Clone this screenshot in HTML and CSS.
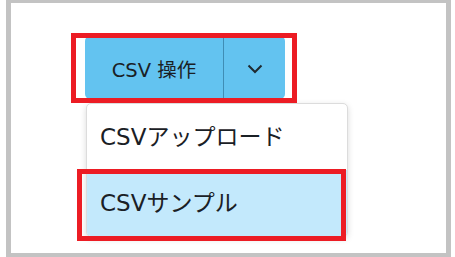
FILE: index.html
```html
<!DOCTYPE html>
<html lang="ja">
<head>
    <meta charset="UTF-8">
    <title>CSV操作</title>
    <link rel="stylesheet" href="styles.css">
</head>
<body>
<div class="frame">
    <div class="btn-group">
        <button class="btn-main" type="button">CSV 操作</button>
        <button class="btn-toggle" type="button">
            <svg width="16" height="10" viewBox="0 0 16 10">
                <path d="M1.5 1.5 L8 8 L14.5 1.5" fill="none" stroke="#1f2a30" stroke-width="2"/>
            </svg>
        </button>
    </div>
    <ul class="menu">
        <li class="menu-item">CSVアップロード</li>
        <li class="menu-item active">CSVサンプル</li>
    </ul>
    <div class="mark mark-button"></div>
    <div class="mark mark-item"></div>
</div>
</body>
</html>
```

FILE: styles.css
```css
body {
    margin: 0;
    background: #fff;
    font-family: "DejaVu Sans", "Noto Sans CJK JP", sans-serif;
    color: #1a2025;
}

.frame {
    position: relative;
    box-sizing: border-box;
    width: 445px;
    height: 257px;
    margin-left: 6px;
    border: 5px solid #c3c3c3;
    border-top-width: 3px;
    border-bottom-width: 4px;
    display: flex;
    flex-direction: column;
    align-items: flex-start;
}

.btn-group {
    display: flex;
    margin: 33px 0 0 74px;
    height: 63px;
    border-radius: 5px;
    overflow: hidden;
    background: #63c3f0;
}

.btn-group button {
    border: none;
    background: transparent;
    font-family: inherit;
    color: #1a2025;
    padding: 0;
    cursor: pointer;
}

.btn-main {
    width: 139px;
    font-size: 19.5px;
    padding-top: 1px !important;
    border-right: 1px solid #3f8db5 !important;
}

.btn-toggle {
    width: 61px;
    display: flex;
    align-items: center;
    justify-content: center;
    padding-top: 2px !important;
}

.menu {
    list-style: none;
    margin: 4px 0 0 75px;
    padding: 0;
    width: 262px;
    box-sizing: border-box;
    border: 1px solid #dcdcdc;
    border-radius: 5px;
    box-shadow: 0 2px 6px rgba(0, 0, 0, 0.15);
    overflow: hidden;
    background: #fff;
}

.menu-item {
    height: 66px;
    line-height: 66px;
    padding-left: 13px;
    font-size: 23px;
}

.menu-item.active {
    background: #c3e9fc;
}

.mark {
    position: absolute;
    box-sizing: border-box;
    border: 5px solid #ec1c24;
}

.mark-button {
    left: 60px;
    top: 30px;
    width: 226px;
    height: 70px;
}

.mark-item {
    left: 66px;
    top: 166px;
    width: 269px;
    height: 72px;
}
```
